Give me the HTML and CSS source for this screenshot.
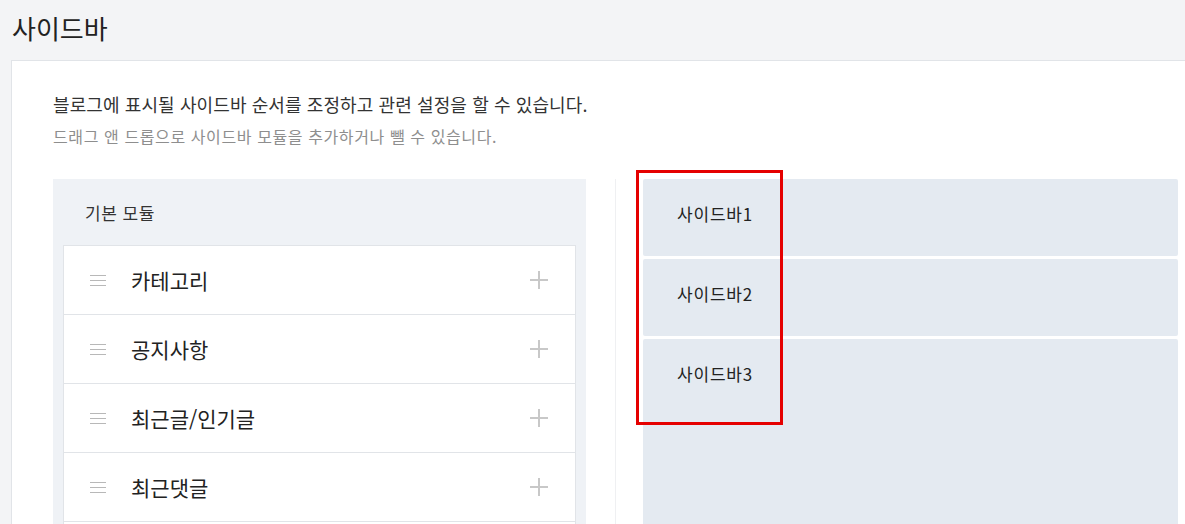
FILE: index.html
```html
<!DOCTYPE html>
<html lang="ko">
<head>
<meta charset="utf-8">
<link rel="stylesheet" href="styles.css">
</head>
<body>
<h1 class="page-title">사이드바</h1>
<div class="card">
  <p class="desc">블로그에 표시될 사이드바 순서를 조정하고 관련 설정을 할 수 있습니다.</p>
  <p class="sub">드래그 앤 드롭으로 사이드바 모듈을 추가하거나 뺄 수 있습니다.</p>
  <div class="columns">
    <div class="modules">
      <div class="modules-title">기본 모듈</div>
      <ul class="module-list">
        <li class="module"><span class="handle"></span><span class="name">카테고리</span><span class="plus"></span></li>
        <li class="module"><span class="handle"></span><span class="name">공지사항</span><span class="plus"></span></li>
        <li class="module"><span class="handle"></span><span class="name">최근글/인기글</span><span class="plus"></span></li>
        <li class="module"><span class="handle"></span><span class="name">최근댓글</span><span class="plus"></span></li>
      </ul>
    </div>
    <div class="divider"></div>
    <div class="sidebars">
      <div class="sidebar-slot">사이드바1</div>
      <div class="sidebar-slot">사이드바2</div>
      <div class="sidebar-slot last">사이드바3</div>
      <div class="highlight"></div>
    </div>
  </div>
</div>
</body>
</html>
```
FILE: styles.css
```css
html, body {
  margin: 0;
  padding: 0;
}
body {
  background: #f3f4f6;
  font-family: "Noto Sans CJK KR", "Noto Sans", sans-serif;
  width: 1185px;
  height: 524px;
  overflow: hidden;
}
.page-title {
  margin: 0;
  height: 60px;
  padding-left: 12px;
  font-size: 26px;
  font-weight: 400;
  line-height: 56px;
  color: #222;
}
.card {
  margin-left: 11px;
  background: #fff;
  border-top: 1px solid #e1e4e8;
  border-left: 1px solid #e1e4e8;
  padding: 30px 0 0 41px;
  width: 1200px;
}
.desc {
  margin: 0;
  font-size: 18px;
  line-height: 27px;
  letter-spacing: 0.1px;
  color: #333;
}
.sub {
  margin: 5px 0 0;
  font-size: 16px;
  line-height: 26px;
  letter-spacing: 0.6px;
  color: #8e8e8e;
}
.columns {
  display: flex;
  margin-top: 30px;
  align-items: stretch;
}
.modules {
  width: 533px;
  background: #eff2f6;
  padding: 0 10px 0 10px;
  box-sizing: border-box;
}
.modules-title {
  padding: 22px 0 20px 22px;
  font-size: 17px;
  line-height: 24px;
  letter-spacing: 0.5px;
  color: #333;
}
.module-list {
  list-style: none;
  margin: 0;
  padding: 0 0 40px;
  background: #fff;
  border: 1px solid #e1e4e8;
}
.module {
  display: flex;
  align-items: center;
  height: 68px;
  border-bottom: 1px solid #e1e4e8;
  padding: 0 27px 0 26px;
}
.handle {
  width: 16px;
  height: 11px;
  border-top: 1px solid #b8b8b8;
  border-bottom: 1px solid #b8b8b8;
  box-sizing: border-box;
  position: relative;
  margin-top: 1px;
}
.handle::before {
  content: "";
  position: absolute;
  left: 0;
  right: 0;
  top: 4px;
  height: 1px;
  background: #b8b8b8;
}
.name {
  margin-left: 25px;
  flex: 1;
  font-size: 21px;
  line-height: 28px;
  color: #222;
}
.plus {
  width: 18px;
  height: 18px;
  position: relative;
}
.plus::before, .plus::after {
  content: "";
  position: absolute;
  background: #c8c8c8;
}
.plus::before {
  left: 0;
  right: 0;
  top: 8px;
  height: 1.5px;
}
.plus::after {
  top: 0;
  bottom: 0;
  left: 8px;
  width: 1.5px;
}
.divider {
  width: 1px;
  background: #eff0f2;
  margin: 0 27px 0 29px;
}
.sidebars {
  width: 535px;
  display: flex;
  flex-direction: column;
  gap: 3px;
  position: relative;
}
.sidebar-slot {
  background: #e4eaf1;
  height: 77px;
  padding: 23px 0 0 34px;
  box-sizing: border-box;
  font-size: 17px;
  line-height: 24px;
  letter-spacing: 0.8px;
  color: #222;
  border-radius: 2px;
}
.sidebar-slot.last {
  flex: 1;
  min-height: 200px;
}
.highlight {
  position: absolute;
  left: -7px;
  top: -9px;
  width: 147px;
  height: 255px;
  border: 3px solid #e50000;
  box-sizing: border-box;
}
```
